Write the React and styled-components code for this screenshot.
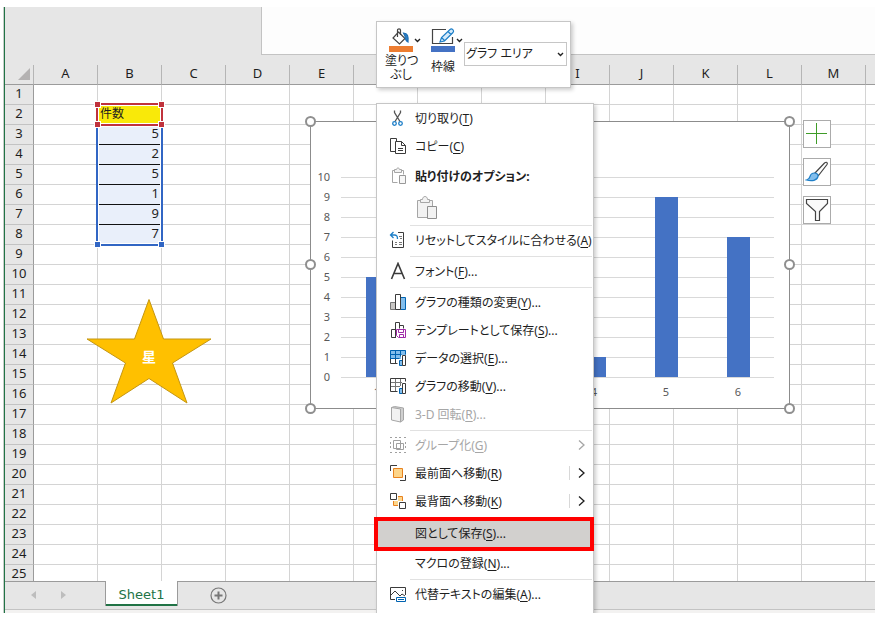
import React from "react";
import styled, { createGlobalStyle } from "styled-components";

const columns = "ABCDEFGHIJKLM".split("");
const rows = Array.from({ length: 25 }, (_, i) => i + 1);
const values = [5, 2, 5, 1, 9, 7];

/* ---------- menu icons, all on an 18 x 18 box ---------- */

const Icon = ({ children }) => (
  <svg width="18" height="18" viewBox="0 0 18 18" fill="none" stroke="#3b3b3b" aria-hidden="true">
    {children}
  </svg>
);

const icons = {
  cut: (
    <Icon>
      <path d="M5.500 1.500v2l5.500 9M11.500 1.500v2L6 12.500" stroke="#555" strokeWidth="1.3" />
      <circle cx="5.500" cy="14.500" r="1.800" stroke="#1e7fc8" strokeWidth="1.3" />
      <circle cx="11.500" cy="14.500" r="1.800" stroke="#1e7fc8" strokeWidth="1.3" />
    </Icon>
  ),
  copy: (
    <Icon>
      <path d="M6.500 14.500h-5v-13h6v3M6.500 4.500h6l4 4v8h-10zM12.500 4.500v4h4M9 11.500h5M9 13.500h5" />
    </Icon>
  ),
  paste: (
    <Icon>
      <path d="M8.500 15.500h-5v-12h2M12.500 3.500h2v4" stroke="#a6a6a6" />
      <path d="M5.500 5.500v-3h2c0-2 3-2 3 0h2v3z" stroke="#a6a6a6" fill="#f2f2f2" />
      <path d="M10.500 8.500h6v8h-6z" stroke="#999" fill="#f7f7f7" />
    </Icon>
  ),
  reset: (
    <Icon>
      <path d="M9 1.500h5.500v15h-11v-7" />
      <path d="M4.500 1L1.500 4l3 3M1.500 4h4c2 0 3 1 3 4" stroke="#1e7fc8" strokeWidth="1.3" />
      <path d="M6 11.500h2M10 11.500h3M6 13.500h2M10 13.500h3M11 7.500h2M10 5.500h3" stroke="#777" />
    </Icon>
  ),
  font: (
    <Icon>
      <path d="M2.500 17L9 1.500L15.500 17M5 11.500h8" strokeWidth="1.6" />
    </Icon>
  ),
  chartType: (
    <Icon>
      <path d="M1.500 9.500h5v7h-5z" fill="#c8c6c4" stroke="#777" />
      <path d="M11.500 4.500h5v12h-5z" fill="#83beec" stroke="#0063b1" />
      <path d="M6.500 1.500h5v15h-5z" fill="#fff" />
    </Icon>
  ),
  template: (
    <Icon>
      <path d="M7 16.500H2.500v-8h4M6.500 16.500v-15h4v6M10.500 4.500h4v3" />
      <path d="M7.500 8.500h9v8h-7l-2-2z" stroke="#a02ba8" fill="#fff" />
      <path d="M9.500 8.500v3h5v-3M10.500 16.500v-3h4v3" stroke="#a02ba8" />
    </Icon>
  ),
  selectData: (
    <Icon>
      <path d="M1 1h16v5h-5v4H1z" fill="#83beec" stroke="none" />
      <path d="M1.500 10v-8.500h15v4M1.500 5.500h11M1.500 9.500h9M6.500 1.500v8M11.500 1.500v6" stroke="#0063b1" />
      <path d="M1.500 10v4.500h7M6.500 10v4" />
      <path d="M10.500 11.500h3v5h-3z" fill="#83beec" stroke="#0063b1" />
      <path d="M13.500 6.500h3v10h-3z" fill="#fff" />
    </Icon>
  ),
  moveChart: (
    <Icon>
      <path d="M1.500 14.500v-13h15v3" />
      <path d="M2 5.500h11M2 9.500h9M6.500 2v12M11.500 2v7" stroke="#777" />
      <path d="M1.500 14.500h7" />
      <path d="M10.500 11.500h3v5h-3z" fill="#83beec" stroke="#0063b1" />
      <path d="M13.500 6.500h3v10h-3z" fill="#fff" />
    </Icon>
  ),
  rotate: (
    <Icon>
      <path d="M2.500 2.500l3-1 9 1.500v12l-3 2z" stroke="#a6a6a6" fill="#d0d0d0" />
      <path d="M2.500 2.500l9 1.500v13l-9-2z" stroke="#a6a6a6" fill="#f2f2f2" />
    </Icon>
  ),
  group: (
    <Icon>
      <path d="M4.500 4.500h7v8h-7zM7.500 7.500h7v6h-7z" stroke="#a0a0a0" />
      <path d="M1 1.500h2M15 1.500h2M1 16.500h2M15 16.500h2M6 1.500h2M10 1.500h2M6 16.500h2M10 16.500h2M1.500 6v2M1.500 10v2M16.500 6v2M16.500 10v2" stroke="#a0a0a0" />
    </Icon>
  ),
  front: (
    <Icon>
      <path d="M1.500 7V1.500H8M16.500 11v5.500H11" />
      <path d="M4.500 4.500h9v9h-9z" fill="#fdd58a" stroke="#e8821e" />
    </Icon>
  ),
  back: (
    <Icon>
      <path d="M9 4.500h4.500V9M4.500 9v4.500H9" fill="none" stroke="#e8821e" />
      <path d="M9 5h4v4H9zM5 9h4v4H5z" fill="#fdd58a" stroke="none" />
      <path d="M1.500 1.500h6v6h-6zM10.500 10.500h6v6h-6z" fill="#fff" />
    </Icon>
  ),
  altText: (
    <Icon>
      <path d="M6 14.500H1.500v-12h15V10M2 10l4-4 5 5 2-2 3 2M13 5.500h1" />
      <path d="M7.500 12.500h9v4h-9z" stroke="#0063b1" fill="#fff" />
      <path d="M9 14.500h6" stroke="#0063b1" />
    </Icon>
  ),
};

const menu = [
  { icon: "cut", label: "切り取り", hotkey: "T" },
  { icon: "copy", label: "コピー", hotkey: "C" },
  { heading: "貼り付けのオプション:" },
  { separator: true },
  { icon: "reset", label: "リセットしてスタイルに合わせる", hotkey: "A" },
  { separator: true },
  { icon: "font", label: "フォント", hotkey: "F", dots: true },
  { separator: true },
  { icon: "chartType", label: "グラフの種類の変更", hotkey: "Y", dots: true },
  { icon: "template", label: "テンプレートとして保存", hotkey: "S", dots: true },
  { icon: "selectData", label: "データの選択", hotkey: "E", dots: true },
  { icon: "moveChart", label: "グラフの移動", hotkey: "V", dots: true },
  { icon: "rotate", label: "3-D 回転", hotkey: "R", dots: true, disabled: true },
  { separator: true },
  { icon: "group", label: "グループ化", hotkey: "G", submenu: true, disabled: true },
  { icon: "front", label: "最前面へ移動", hotkey: "R", submenu: true, split: true },
  { icon: "back", label: "最背面へ移動", hotkey: "K", submenu: true, split: true },
  { label: "図として保存", hotkey: "S", dots: true, marked: true },
  { label: "マクロの登録", hotkey: "N", dots: true },
  { separator: true },
  { icon: "altText", label: "代替テキストの編集", hotkey: "A", dots: true },
];

const MenuEntry = ({ item }) => {
  if (item.separator) return <Separator role="separator" />;

  if (item.heading) {
    return (
      <>
        <MenuHeading>
          <IconSlot>{icons.paste}</IconSlot>
          {item.heading}
        </MenuHeading>
        <PasteOptions>
          <PasteButton type="button" disabled aria-label="貼り付け">
            <svg width="22" height="24" viewBox="0 0 22 24" fill="#f2f2f2" stroke="#a6a6a6">
              <path d="M1.500 4.500h15v17h-15z" />
              <path d="M4.500 6.500v-3h2c0-4 5-4 5 0h2v3z" />
              <path d="M11.500 10.500h9v12h-9z" stroke="#8f8f8f" />
            </svg>
          </PasteButton>
        </PasteOptions>
      </>
    );
  }

  return (
    <MenuItem type="button" role="menuitem" disabled={item.disabled} $marked={item.marked}>
      <IconSlot>{item.icon && icons[item.icon]}</IconSlot>
      <span>
        {item.label}(<u>{item.hotkey}</u>){item.dots && "..."}
      </span>
      {item.submenu && (
        <Submenu $split={item.split}>
          <svg width="8" height="12" viewBox="0 0 8 12" fill="none" stroke="currentColor" strokeWidth="1.3">
            <path d="M1 1.500L6 6L1 10.500" />
          </svg>
        </Submenu>
      )}
    </MenuItem>
  );
};

const Caret = () => (
  <svg width="7" height="5" viewBox="0 0 7 5" fill="none" stroke="#222" strokeWidth="1.400">
    <path d="M1 1l2.500 2.500L6 1" />
  </svg>
);

/* ---------- column chart ---------- */

const plot = { left: 31, right: 464, top: 56, base: 256 };
const slot = (plot.right - plot.left) / values.length;

const Chart = () => (
  <ChartFrame>
    <svg width="480" height="288" viewBox="0 0 480 288" role="img" aria-label="件数">
      <rect x="0.500" y="0.500" width="479" height="287" fill="#fff" stroke="#8c8c8c" />
      {Array.from({ length: 11 }, (_, n) => {
        const y = plot.base - n * 20;
        return (
          <g key={n}>
            <path d={`M${plot.left} ${y + 0.5}H${plot.right}`} stroke="#d9d9d9" />
            <text x="20" y={y + 4} textAnchor="end">{n}</text>
          </g>
        );
      })}
      {values.map((value, i) => {
        const center = Math.round(plot.left + slot * (i + 0.5));
        return (
          <g key={i}>
            <rect x={center - 11} y={plot.base - value * 20} width="23" height={value * 20} fill="#4472c4" />
            <text x={center} y="275" textAnchor="middle">{i + 1}</text>
          </g>
        );
      })}
      {[0, 240, 479].map((x) =>
        [0, 143, 287].map((y) =>
          x === 240 && y === 143 ? null : (
            <circle key={`${x}-${y}`} cx={x + 0.5} cy={y + 0.5} r="4.500" fill="#fff" stroke="#8f8f8f" strokeWidth="2" />
          )
        )
      )}
    </svg>
  </ChartFrame>
);

const App = () => {
  return (
    <Page>
      <GlobalStyle />
      <Window>
        <TopArea>
          <Ribbon />
        </TopArea>

        <Sheet>
          <Grid>
            <thead>
              <tr>
                <Corner>
                  <svg width="12" height="12" viewBox="0 0 12 12" fill="#b4b2b2">
                    <path d="M12 0v12H0z" />
                  </svg>
                </Corner>
                {columns.map((name) => (
                  <ColumnHead key={name} scope="col">{name}</ColumnHead>
                ))}
                <RestHead />
              </tr>
            </thead>
            <tbody>
              {rows.map((row) => (
                <tr key={row}>
                  <RowHead scope="row">{row}</RowHead>
                  {columns.map((name) => {
                    if (name === "B" && row === 2) return <TitleCell key={name}>件数</TitleCell>;
                    if (name === "B" && row > 2 && row < 9) {
                      return <ValueCell key={name}>{values[row - 3]}</ValueCell>;
                    }
                    return <Cell key={name} />;
                  })}
                  <RestCell />
                </tr>
              ))}
            </tbody>
          </Grid>

          <RangeBox $top={69} $height={122} $color="#3166c4">
            <Handle $v="bottom" $h="left" />
            <Handle $v="bottom" $h="right" />
          </RangeBox>
          <RangeBox $top={48} $height={23} $color="#c0323c">
            <Handle $v="top" $h="left" />
            <Handle $v="top" $h="right" />
            <Handle $v="bottom" $h="left" />
            <Handle $v="bottom" $h="right" />
          </RangeBox>

          <Star>
            <svg width="126" height="106" viewBox="0 0 126 106">
              <path
                d="M63 1.500L77.500 41H125L86.500 65L101 105L63 80.500L25 105L39.500 65L1 41H48.500z"
                fill="#ffc000"
                stroke="#c49612"
              />
              <text x="63" y="64" textAnchor="middle">星</text>
            </svg>
          </Star>

          <Chart />

          <ChartTools>
            <ChartTool type="button" aria-label="グラフ要素">
              <svg width="22" height="22" viewBox="0 0 22 22" stroke="#3f9c28">
                <path d="M10.500 0v21M0 10.500h21" />
              </svg>
            </ChartTool>
            <ChartTool type="button" aria-label="グラフ スタイル">
              <svg width="24" height="24" viewBox="0 0 24 24" fill="none" stroke="#444" strokeWidth="1.2">
                <path d="M10 13L19.500 3c2-1.500 3.500-.500 2.500 1.500L13.500 15.500z" fill="#fff" />
                <path d="M9.500 13c2 0 4 1.500 3.500 3.500-1 4-6 5-11.500 3.500 2-.500 3-1.500 3.500-3.500S7.500 13 9.500 13z" fill="#83beec" stroke="#1e7fc8" />
              </svg>
            </ChartTool>
            <ChartTool type="button" aria-label="グラフ フィルター">
              <svg width="24" height="24" viewBox="0 0 24 24" fill="#fafafa" stroke="#444" strokeWidth="1.200">
                <path d="M1.500 1.500h21v4l-8 8v9h-4v-9l-9-8z" />
              </svg>
            </ChartTool>
          </ChartTools>
        </Sheet>

        <TabBar>
          <TabArrows>
            <svg width="6" height="8" viewBox="0 0 6 8"><path d="M5 0v8L0 4z" fill="#bdbdbd" /></svg>
            <svg width="6" height="8" viewBox="0 0 6 8"><path d="M1 0v8l5-4z" fill="#bdbdbd" /></svg>
          </TabArrows>
          <SheetTab type="button">Sheet1</SheetTab>
          <AddSheet type="button" aria-label="新しいシート">
            <svg width="17" height="17" viewBox="0 0 17 17" fill="none" stroke="#777">
              <circle cx="8.500" cy="8.500" r="7.500" strokeWidth="1.200" />
              <path d="M8.500 4.500v8M4.500 8.500h8" strokeWidth="2" />
            </svg>
          </AddSheet>
        </TabBar>
        <StatusBar />

        <MiniToolbar>
          <ToolButton type="button">
            <ToolIcon>
              <svg width="24" height="24" viewBox="0 0 24 24" fill="none" stroke="#444" strokeWidth="1.200">
                <path d="M9.500 4L16 10.500L10.500 16L4 10z" fill="#fff" />
                <path d="M8.500 9V2c0-1.500 3-1.500 3 0v5" />
                <path d="M14.500 5c4 0 5 3 4.500 9-2-1-3-3-3-6z" fill="#2b7fc4" stroke="#1e6fb4" />
                <path d="M0 18h24v6H0z" fill="#ed7d31" stroke="none" />
              </svg>
              <Caret />
            </ToolIcon>
            <ToolName>塗りつ<br />ぶし</ToolName>
          </ToolButton>
          <ToolButton type="button">
            <ToolIcon>
              <svg width="24" height="24" viewBox="0 0 24 24" fill="none" stroke="#444" strokeWidth="1.200">
                <path d="M15 1.500H1.500v14h20V9" />
                <path d="M9 14l1.500-4.500L19 1.500c2-1.500 4.500 1 3 3L13.500 13zM17 3.500l3 3M10.500 9.500l3 3" fill="#d5eafa" stroke="#1e7fc8" />
                <path d="M0 18h24v6H0z" fill="#4472c4" stroke="none" />
              </svg>
              <Caret />
            </ToolIcon>
            <ToolName $single>枠線</ToolName>
          </ToolButton>
          <SelectWrap>
            <select aria-label="グラフ要素" defaultValue="area">
              <option value="area">グラフ エリア</option>
            </select>
            <Caret />
          </SelectWrap>
        </MiniToolbar>

        <ContextMenu role="menu">
          {menu.map((item, i) => (
            <MenuEntry key={i} item={item} />
          ))}
        </ContextMenu>
      </Window>
    </Page>
  );
};

const GlobalStyle = createGlobalStyle`
  * {
    box-sizing: border-box;
  }

  body {
    margin: 0;
    background: #fff;
    color: #1e1e1e;
    font: 13px "Noto Sans", "Noto Sans CJK JP", sans-serif;
  }

  button, select {
    margin: 0;
    padding: 0;
    border: none;
    background: none;
    color: inherit;
    font: inherit;
  }

  svg {
    display: block;
    flex: none;
  }
`;

const Page = styled.div`
  height: 100vh;
  padding: 7px 7px 7px 4px;
`;

const Window = styled.main`
  position: relative;
  display: flex;
  flex-direction: column;
  height: 100%;
  overflow: hidden;
  border-left: 1px solid #217346;
  box-shadow: -1px 0 0 #c6cec9;
  background: #e6e6e6;
`;

const TopArea = styled.header`
  display: flex;
  flex: none;
  height: 48px;
`;

const Ribbon = styled.div`
  flex: 1;
  margin-left: 256px;
  border-left: 1px solid #c3c3c3;
  border-bottom: 1px solid #c3c3c3;
  background: #fdfdfd;
`;

const Sheet = styled.section`
  position: relative;
  flex: 1;
  min-height: 0;
  overflow: hidden;
  padding-top: 10px;
`;

const Grid = styled.table`
  width: 100%;
  table-layout: fixed;
  border-collapse: separate;
  border-spacing: 0;
  background: #fff;
  line-height: 17px;

  td, th {
    height: 20px;
    padding: 0 0 2px;
    font-weight: normal;
  }
`;

const ColumnHead = styled.th`
  width: 64px;
  border-bottom: 1px solid #9b9b9b;
  border-right: 1px solid #b5b5b5;
  background: #e6e6e6;
`;

const RestHead = styled.td`
  border-bottom: 1px solid #9b9b9b;
  background: #e6e6e6;
`;

const Corner = styled.td`
  width: 29px;
  border-bottom: 1px solid #9b9b9b;
  border-right: 1px solid #b5b5b5;
  background: #e6e6e6;

  svg {
    margin-left: 13px;
  }
`;

const RowHead = styled.th`
  border-bottom: 1px solid #c3c3c3;
  border-right: 1px solid #9b9b9b;
  background: #e6e6e6;
`;

const Cell = styled.td`
  border-right: 1px solid #d4d4d4;
  border-bottom: 1px solid #d4d4d4;
`;

const RestCell = styled.td`
  border-bottom: 1px solid #d4d4d4;
`;

const TitleCell = styled(Cell)`
  && {
    padding-left: 2px;
  }
  background: #f9e909;
  font-size: 12px;
`;

const ValueCell = styled(Cell)`
  && {
    padding-right: 2px;
  }
  border-bottom-color: #111;
  background: #e9effa;
  text-align: right;
`;

const RangeBox = styled.div`
  position: absolute;
  left: 91px;
  top: ${(p) => p.$top}px;
  width: 67px;
  height: ${(p) => p.$height}px;
  border: 2px solid ${(p) => p.$color};
  box-shadow: inset 0 0 0 1px #fff;
  color: ${(p) => p.$color};
`;

const Handle = styled.i`
  position: absolute;
  ${(p) => p.$v}: -3px;
  ${(p) => p.$h}: -3px;
  width: 5px;
  height: 5px;
  background: currentColor;
  box-shadow: 0 0 0 1px #fff;
`;

const Star = styled.div`
  position: absolute;
  left: 81px;
  top: 243px;

  text {
    fill: #fff;
    font: bold 14px "Noto Sans CJK JP", sans-serif;
  }
`;

const ChartFrame = styled.div`
  position: absolute;
  left: 305px;
  top: 66px;

  svg {
    overflow: visible;
  }

  text {
    fill: #595959;
    font-size: 11px;
  }
`;

const ChartTools = styled.div`
  position: absolute;
  left: 798px;
  top: 65px;
  display: grid;
  gap: 10px;
`;

const ChartTool = styled.button`
  display: grid;
  place-items: center;
  width: 28px;
  height: 28px;
  border: 1px solid #ababab;
  background: #fff;
`;

const TabBar = styled.nav`
  display: flex;
  flex: none;
  height: 28px;
  background: linear-gradient(#9b9b9b 1px, #e6e6e6 1px);
`;

const TabArrows = styled.div`
  display: flex;
  align-items: center;
  gap: 23px;
  width: 100px;
  padding-left: 26px;
`;

const SheetTab = styled.button`
  width: 73px;
  height: 25px;
  padding-top: 2px;
  border: solid #9b9b9b;
  border-width: 0 1px;
  background: #fff;
  box-shadow: inset 0 -2px 0 #217346;
  color: #217346;
  font: 13px "DejaVu Sans", sans-serif;
`;

const AddSheet = styled.button`
  margin-left: 32px;
`;

const StatusBar = styled.footer`
  flex: none;
  height: 4px;
  border-top: 1px solid #c3c3c3;
  background: #f3f2f1;
`;

const popup = `
  position: absolute;
  left: 371px;
  border: 1px solid #c6c6c6;
  background: #fff;
  font-size: 12px;
  font-feature-settings: "palt";
  box-shadow: 2px 2px 4px rgba(0, 0, 0, 0.2);
`;

const MiniToolbar = styled.div`
  ${popup}
  top: 14px;
  display: flex;
  height: 67px;
  padding: 6px 3px 0 8px;
`;

const ToolButton = styled.button`
  display: flex;
  flex-direction: column;
  width: 42px;
  line-height: 14px;
`;

const ToolIcon = styled.span`
  display: flex;
  align-items: center;
  gap: 1px;
  padding-left: 4px;
`;

const ToolName = styled.span`
  width: 32px;
  padding-top: ${(p) => (p.$single ? 8 : 2)}px;
  text-align: center;
  white-space: nowrap;
`;

const SelectWrap = styled.div`
  position: relative;
  width: 103px;
  height: 24px;
  margin: 14px 0 0 -5px;

  select {
    width: 100%;
    height: 100%;
    padding: 0 0 2px 1px;
    border: 1px solid #c6c6c6;
    background: #fff;
    appearance: none;
  }

  svg {
    position: absolute;
    right: 3px;
    top: 10px;
    pointer-events: none;
  }
`;

const ContextMenu = styled.div`
  ${popup}
  top: 96px;
  bottom: -8px;
  width: 218px;
`;

const MenuItem = styled.button`
  display: flex;
  align-items: center;
  width: 100%;
  height: 28px;
  text-align: left;
  white-space: nowrap;

  u {
    text-underline-offset: 2px;
  }

  &:disabled {
    color: #a6a6a6;
  }

  ${(p) =>
    p.$marked &&
    `
    position: relative;
    width: 220px;
    height: 34px;
    margin: 2px 0 -2px -3px;
    padding-bottom: 2px;
    border: 4px solid #f00;
    background: #d2d0ce;

    span:first-child {
      width: 37px;
    }
  `}
`;

const IconSlot = styled.span`
  flex: none;
  width: 38px;
  padding-left: 12px;
`;

const MenuHeading = styled.div`
  display: flex;
  align-items: center;
  height: 32px;
  font-weight: bold;
`;

const PasteOptions = styled.div`
  display: flex;
  align-items: center;
  height: 31px;
  padding-left: 39px;
`;

const PasteButton = styled.button`
  display: block;
`;

const Separator = styled.div`
  height: 1px;
  margin: 2px 1px 0 33px;
  background: #e1e1e1;
`;

const Submenu = styled.span`
  display: flex;
  align-items: center;
  height: 14px;
  margin-left: auto;
  margin-right: 7px;
  padding-left: 8px;
  border-left: 1px solid ${(p) => (p.$split ? "#d8d8d8" : "transparent")};
`;

export default App;
